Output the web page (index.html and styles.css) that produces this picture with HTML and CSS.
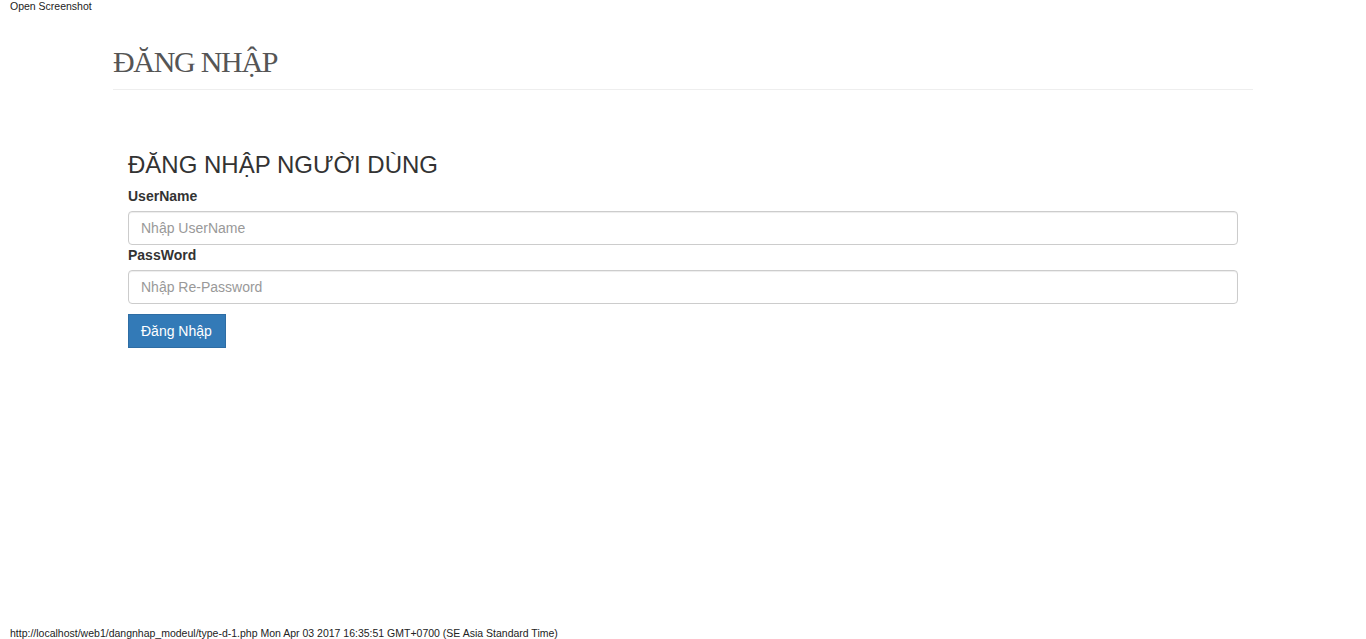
FILE: index.html
```html
<!DOCTYPE html>
<html lang="vi">
<head>
<meta charset="utf-8">
<title>Đăng nhập</title>
<link rel="stylesheet" href="styles.css">
</head>
<body>
<div class="page">
  <div class="shot-link">Open Screenshot</div>
  <main class="container">
    <div class="page-header">
      <h1 class="page-title">ĐĂNG NHẬP</h1>
    </div>
    <form class="login-form">
      <h3 class="form-title">ĐĂNG NHẬP NGƯỜI DÙNG</h3>
      <label class="field-label" for="username">UserName</label>
      <input class="field-input" id="username" type="text" placeholder="Nhập UserName">
      <label class="field-label" for="password">PassWord</label>
      <input class="field-input" id="password" type="password" placeholder="Nhập Re-Password">
      <div class="actions">
        <button class="btn-primary" type="button">Đăng Nhập</button>
      </div>
    </form>
  </main>
  <div class="footer-line">http://localhost/web1/dangnhap_modeul/type-d-1.php Mon Apr 03 2017 16:35:51 GMT+0700 (SE Asia Standard Time)</div>
</div>
</body>
</html>
```

FILE: styles.css
```css
* { box-sizing: border-box; }
html, body { margin: 0; padding: 0; }
body {
  font-family: "Liberation Sans", Arial, sans-serif;
  font-size: 14px;
  line-height: 1.42857;
  color: #333;
  background: #fff;
}
.page {
  height: 639px;
  display: flex;
  flex-direction: column;
}
.shot-link {
  font-size: 10.5px;
  line-height: 12px;
  color: #222;
  padding: 0 0 0 10px;
}
.container {
  flex: 1;
  width: 1140px;
  margin: 0 auto;
}
.page-header {
  padding-top: 33px;
  padding-bottom: 11px;
  border-bottom: 1px solid #eee;
}
.page-title {
  margin: 0;
  font-family: "Liberation Serif", "Times New Roman", serif;
  font-weight: normal;
  font-size: 30px;
  letter-spacing: -1.3px;
  line-height: 33px;
  color: #555;
}
.login-form {
  display: flex;
  flex-direction: column;
  align-items: stretch;
  padding: 0 15px;
  margin-top: 62px;
}
.form-title {
  margin: 0 0 8px;
  font-size: 24px;
  font-weight: 500;
  line-height: 1.1;
  color: #333;
}
.field-label {
  font-weight: bold;
  margin-bottom: 5px;
  line-height: 20px;
}
.field-input {
  height: 34px;
  padding: 6px 12px;
  font-family: inherit;
  font-size: 14px;
  color: #555;
  border: 1px solid #ccc;
  border-radius: 4px;
  box-shadow: inset 0 1px 1px rgba(0,0,0,.075);
}
.field-input::placeholder { color: #999; }
.actions {
  margin-top: 10px;
  display: flex;
}
.btn-primary {
  height: 34px;
  padding: 6px 13px 6px 12px;
  font-family: inherit;
  font-size: 14px;
  line-height: 20px;
  color: #fff;
  background: #337ab7;
  border: 1px solid #2e6da4;
  border-radius: 0;
}
.footer-line {
  font-size: 10.5px;
  line-height: 12px;
  color: #222;
  padding: 0 0 0 10px;
}
```
